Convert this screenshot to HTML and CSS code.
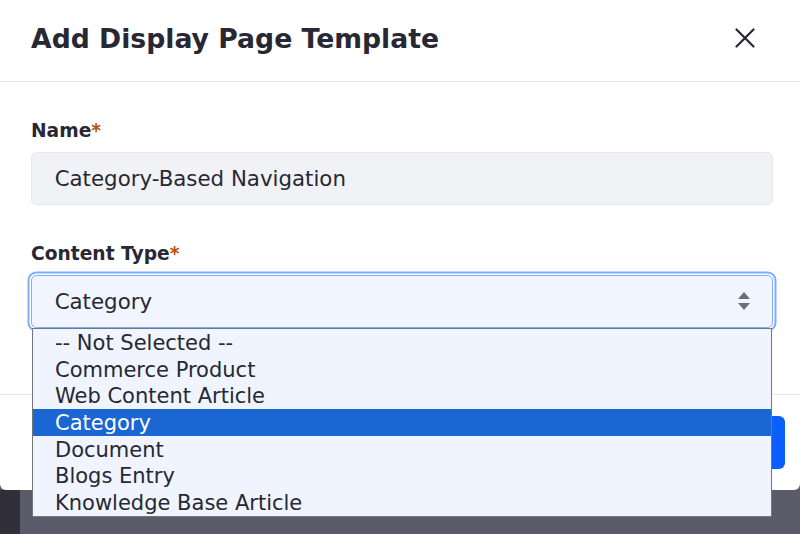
FILE: index.html
```html
<!DOCTYPE html>
<html>
<head>
    <title>Add Display Page Template</title>
    <link rel="stylesheet" href="styles.css">
</head>
<body>

    <div class="modal">
        <div class="modal-header">
            <h1 class="modal-title">Add Display Page Template</h1>
            <button class="close" aria-label="Close">
                <svg width="20" height="20" viewBox="0 0 20 20">
                    <path d="M1.5 1.5 L18.5 18.5 M18.5 1.5 L1.5 18.5" stroke="#272833" stroke-width="2.2" stroke-linecap="round" fill="none"/>
                </svg>
            </button>
        </div>

        <div class="modal-body">
            <div class="form-group">
                <label>Name<span class="req">*</span></label>
                <div class="form-control">Category-Based Navigation</div>
            </div>
            <div class="form-group">
                <label>Content Type<span class="req">*</span></label>
                <div class="form-control select focus">
                    <span>Category</span>
                    <svg class="caret" width="14" height="20" viewBox="0 0 14 20">
                        <path d="M7 1 L13 8 L1 8 Z" fill="#6b6c7e"/>
                        <path d="M1 12 L13 12 L7 19 Z" fill="#6b6c7e"/>
                    </svg>
                </div>
            </div>
        </div>

        <div class="modal-footer">
            <button class="btn-primary">Save</button>
        </div>

        <ul class="options">
            <li>-- Not Selected --</li>
            <li>Commerce Product</li>
            <li>Web Content Article</li>
            <li class="selected">Category</li>
            <li>Document</li>
            <li>Blogs Entry</li>
            <li>Knowledge Base Article</li>
        </ul>
    </div>

    <div class="backdrop">
        <div class="rail"></div>
        <div class="page"></div>
    </div>

</body>
</html>
```

FILE: styles.css
```css
body {
    margin: 0;
    height: 534px;
    overflow: hidden;
    font-family: "DejaVu Sans", sans-serif;
    color: #272833;
    background-color: #5c5b69;
}

.modal {
    position: relative;
    height: 490px;
    background-color: #fff;
    border-radius: 0 0 6px 6px;
}

.modal-header {
    box-sizing: border-box;
    height: 82px;
    border-bottom: 1px solid #e7e7ed;
    display: flex;
    align-items: center;
    justify-content: space-between;
    padding: 0 45px 5px 31px;
}

.modal-title {
    margin: 0;
    font-size: 26.67px;
    font-weight: bold;
    color: #272833;
}

.close {
    background: none;
    border: 0;
    padding: 0;
    width: 20px;
    height: 20px;
    display: flex;
}

.modal-body {
    height: 274px;
    padding: 38px 27px 0 31px;
}

.form-group {
    margin-bottom: 38px;
}

label {
    display: block;
    font-size: 18.67px;
    font-weight: bold;
    margin-bottom: 10.67px;
}

.req {
    color: #b95000;
}

.form-control {
    box-sizing: border-box;
    height: 53.33px;
    display: flex;
    align-items: center;
    padding: 0 21px 0 22.67px;
    font-size: 21.33px;
    background-color: #f1f2f5;
    border: 1.33px solid #e7e7ed;
    border-radius: 5.33px;
}

.select {
    justify-content: space-between;
}

.focus {
    background-color: #f0f5ff;
    border-color: #80acff;
    box-shadow: 0 0 0 1.5px #fff, 0 0 0 3.5px #80acff;
}

.modal-footer {
    border-top: 1px solid #e7e7ed;
    display: flex;
    justify-content: flex-end;
    padding: 21px 15px 0 0;
}

.btn-primary {
    width: 110px;
    height: 53.33px;
    background-color: #0b5fff;
    color: #fff;
    border: 0;
    border-radius: 6px;
    font-family: inherit;
    font-size: 21.33px;
}

/* open native-looking list of the select */
.options {
    position: absolute;
    top: 328px;
    left: 32px;
    width: 738px;
    margin: 0;
    padding: 0;
    list-style: none;
    background-color: #eff4fe;
    border: 1px solid #767676;
}

.options li {
    height: 26.67px;
    line-height: 28px;
    padding-left: 22px;
    font-size: 21px;
    color: #272833;
}

.options .selected {
    background-color: #1a66d2;
    color: #fff;
}

.backdrop {
    display: flex;
    height: 44px;
}

.rail {
    width: 20px;
    background-color: #302f3b;
}

.page {
    flex: 1;
    background-color: #5c5b69;
}
```
